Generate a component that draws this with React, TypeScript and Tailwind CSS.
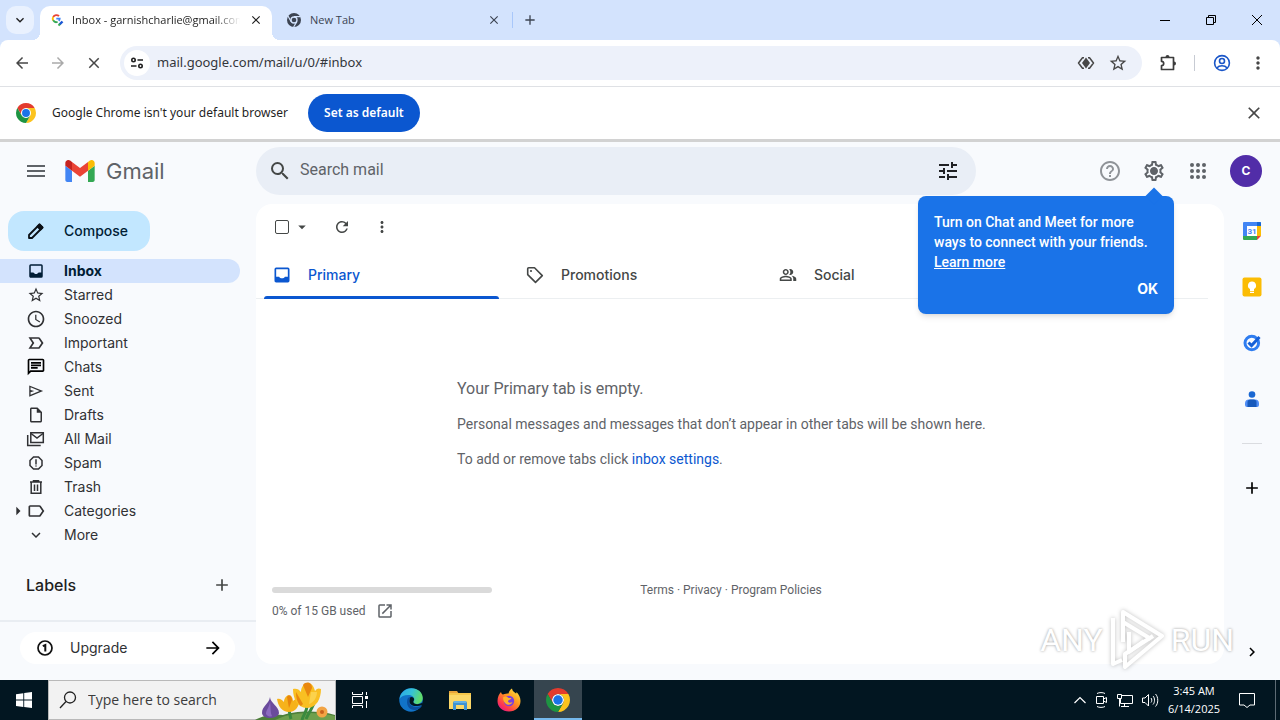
import type { ReactNode } from "react";
import {
  MdAccessTime,
  MdAdd,
  MdArrowBack,
  MdArrowDropDown,
  MdArrowForward,
  MdArrowRight,
  MdChevronRight,
  MdClose,
  MdExpandMore,
  MdHelpOutline,
  MdLabelImportantOutline,
  MdLabelOutline,
  MdMenu,
  MdMoreVert,
  MdOpenInNew,
  MdOutlineChat,
  MdOutlineInsertDriveFile,
  MdOutlinePeopleAlt,
  MdOutlineReport,
  MdOutlineSettings,
  MdRefresh,
  MdSearch,
  MdStarBorder,
  MdTune,
} from "react-icons/md";

/* ---------- Icons ---------- */

function ChromeLogo({ className }: { className?: string }) {
  return (
    <svg viewBox="0 0 48 48" className={className}>
      <circle cx="24" cy="24" r="12" fill="#fff" />
      <path fill="#e33b2e" d="M24 12h20.78a24 24 0 0 0-41.56 0l10.39 18A12 12 0 0 1 24 12Z" />
      <path fill="#fcc31e" d="M34.39 30 24 48a24 24 0 0 0 20.78-36H24a12 12 0 0 1 10.39 18Z" />
      <path fill="#1e9442" d="M13.61 30 3.22 12A24 24 0 0 0 24 48l10.39-18a12 12 0 0 1-20.78 0Z" />
      <circle cx="24" cy="24" r="9.5" fill="#1a73e8" />
    </svg>
  );
}

function ChromeMono() {
  return (
    <svg viewBox="0 0 48 48" className="size-4">
      <circle cx="24" cy="24" r="21" fill="#3c4452" />
      <circle cx="24" cy="24" r="11" fill="#d3e3fd" />
      <circle cx="24" cy="24" r="7" fill="#3c4452" />
      <path d="M24 14h20M15.5 29 6 12M32.5 29 23 45" stroke="#d3e3fd" strokeWidth="3.5" />
    </svg>
  );
}

function GoogleFavicon() {
  return (
    <svg viewBox="0 0 16 16" className="size-4" fill="none" strokeWidth="1.8">
      <path d="M9 4.2A3.6 3.6 0 0 0 3.2 5" stroke="#ea4335" />
      <path d="M3.2 4.9a3.6 3.6 0 0 0 0 3.6" stroke="#fbbc04" />
      <path d="M3.2 8.3a3.6 3.6 0 0 0 4.4 1.6" stroke="#34a853" />
      <path d="M6.3 6.6h3.4c0 1-.3 1.7-.9 2.3" stroke="#4285f4" />
      <path d="m9.5 12.5 3-3" stroke="#1a56d6" strokeWidth="2.4" />
      <path d="m8.5 13.5 1.5-1.5" stroke="#34a853" strokeWidth="2" />
    </svg>
  );
}

function GmailLogo() {
  return (
    <svg viewBox="52 42 88 66" className="h-[22px] w-[30px]">
      <path fill="#4285f4" d="M58 108h14V74L52 59v43c0 3.32 2.69 6 6 6" />
      <path fill="#34a853" d="M120 108h14c3.32 0 6-2.69 6-6V59l-20 15" />
      <path fill="#fbbc04" d="M120 48v26l20-15v-8c0-7.42-8.47-11.65-14.4-7.2" />
      <path fill="#ea4335" d="M72 74V48l24 18 24-18v26L96 92" />
      <path fill="#c5221f" d="M52 51v8l20 15V48l-5.6-4.2c-5.94-4.45-14.4-.22-14.4 7.2" />
    </svg>
  );
}

function SiteInfoIcon() {
  return (
    <svg viewBox="0 0 16 16" className="size-4" fill="none" stroke="#1f1f1f" strokeWidth="1.6">
      <circle cx="4.5" cy="5" r="1.7" />
      <path d="M8.5 5H14M2 11h5.5" />
      <circle cx="11.5" cy="11" r="1.7" />
    </svg>
  );
}

function LensIcon() {
  return (
    <svg viewBox="0 0 20 20" className="size-5" fill="none" stroke="#474747" strokeWidth="1.5" strokeLinejoin="round">
      <path d="M8 4.8H6.500L2.500 10l4 5.200H8M12 4.800h1.500l4 5.200-4 5.200H12" />
      <path fill="#474747" stroke="none" d="m10 4.500 4 5.500-4 5.500L6 10Z" />
    </svg>
  );
}

function PuzzleIcon() {
  return (
    <svg viewBox="0 0 20 20" className="size-5" fill="none" stroke="#3c3c3c" strokeWidth="1.7" strokeLinejoin="round">
      <path d="M3.5 4.5h12v12h-12v-3.8c1.4 0 2.2-1 2.2-2.2s-.8-2.2-2.2-2.2V4.5Z" />
      <path fill="#3c3c3c" stroke="none" d="M7.5 4a2 2 0 0 1 4 0ZM16 8.5a2 2 0 0 1 0 4Z" />
    </svg>
  );
}

function ProfileIcon() {
  return (
    <svg viewBox="0 0 20 20" className="size-5" fill="none" stroke="#1a56c8" strokeWidth="1.6">
      <circle cx="10" cy="10" r="7.4" />
      <circle cx="10" cy="8" r="2.5" />
      <path d="M4.8 15c1.3-1.5 3-2.2 5.2-2.2s3.9.7 5.2 2.2" />
    </svg>
  );
}

function PencilIcon() {
  return (
    <svg viewBox="0 0 20 20" className="size-5" fill="none" stroke="#0b1016" strokeWidth="1.8" strokeLinejoin="round">
      <path d="M3 17v-3L13.5 3.5l3 3L6 17H3Z" />
      <path d="m11.5 5.5 2-2 3 3-2 2Z" fill="#0b1016" />
    </svg>
  );
}

function InboxIcon({ className }: { className?: string }) {
  return (
    <svg viewBox="0 0 24 24" className={className} fill="currentColor">
      <path
        fillRule="evenodd"
        d="M19 3H5a2 2 0 0 0-2 2v14c0 1.1.9 2 2 2h14a2 2 0 0 0 2-2V5a2 2 0 0 0-2-2ZM5 5h14v9h-3.500c-.8 1.200-2 2-3.500 2s-2.700-.8-3.500-2H5Z"
      />
    </svg>
  );
}

function SendIcon() {
  return (
    <svg viewBox="0 -960 960 960" className="size-[18px]" fill="currentColor">
      <path d="M120-180v-600l740 300-740 300Zm70-105 480-195-480-195v135l200 60-200 60v135Z" />
    </svg>
  );
}

function AllMailIcon() {
  return (
    <svg viewBox="0 0 20 20" className="size-5" fill="none" stroke="currentColor" strokeWidth="1.5">
      <path d="M4.8 3.7h12.500v9.800H4.800Z" />
      <path d="m5 4.5 6 4.5 6-4.5M1.700 6v10.500h13" />
    </svg>
  );
}

function TrashIcon() {
  return (
    <svg viewBox="0 0 20 20" className="size-5" fill="none" stroke="currentColor" strokeWidth="1.5">
      <path d="M4 5h12M7.5 4.500V3.700h5v.8M5.200 5v11.300h9.600V5M8.500 7.500V14M11.500 7.500V14" />
    </svg>
  );
}

function TagIcon() {
  return (
    <svg viewBox="0 0 20 20" className="size-5" fill="none" stroke="currentColor" strokeWidth="1.6" strokeLinejoin="round">
      <path d="M2.7 3.800v5.800l7.800 7.800 6.800-6.800L9.500 2.800H3.700c-.6 0-1 .4-1 1Z" />
      <circle cx="6" cy="6" r="1.1" fill="currentColor" stroke="none" />
    </svg>
  );
}

function SettingsIcon() {
  return (
    <svg viewBox="0 0 24 24" className="size-6" fill="currentColor">
      <MdOutlineSettings size={24} />
      <circle cx="12" cy="12" r="3.2" />
    </svg>
  );
}

function AppsIcon() {
  const steps = [4, 10, 16];
  return (
    <svg viewBox="0 0 20 20" className="size-5" fill="#5f6368">
      {steps.map((y) => steps.map((x) => <circle key={`${x}-${y}`} cx={x} cy={y} r="2" />))}
    </svg>
  );
}

function OneIcon() {
  return (
    <svg viewBox="0 0 20 20" className="size-5" fill="none" stroke="#111" strokeWidth="1.7">
      <circle cx="10" cy="10" r="7" />
      <path d="M7.8 8.200 10.300 7v6.500" strokeWidth="2" />
    </svg>
  );
}

function CalendarIcon() {
  return (
    <svg viewBox="0 0 20 20" className="size-5">
      <path fill="#4285f4" d="M2 1h16a1 1 0 0 1 1 1v3H5v10H1V2a1 1 0 0 1 1-1Z" />
      <path fill="#1967d2" d="M15 1h3a1 1 0 0 1 1 1v3h-4Z" />
      <path fill="#fbbc04" d="M15 5h4v10h-4Z" />
      <path fill="#34a853" d="M1 15h14v4H2a1 1 0 0 1-1-1Z" />
      <path fill="#ea4335" d="M15 15h4l-4 4Z" />
      <path fill="#fff" d="M5 5h10v10H5Z" />
      <text x="10" y="13" fontSize="8" fontWeight="700" textAnchor="middle" fill="#4285f4" fontFamily="Roboto, sans-serif">
        31
      </text>
    </svg>
  );
}

function KeepIcon() {
  return (
    <svg viewBox="0 0 20 20" className="size-5">
      <rect x="0.5" y="0.5" width="19" height="19" rx="2" fill="#fbbc04" />
      <path fill="#fff" d="M10 4.500a4 4 0 0 0-2 7.500v2h4v-2a4 4 0 0 0-2-7.500ZM8 14.800h4V16H8Z" />
    </svg>
  );
}

function TasksIcon() {
  return (
    <svg viewBox="0 0 20 20" className="size-5" fill="none" strokeWidth="3">
      <circle cx="9.8" cy="10" r="6.8" stroke="#2f7df0" />
      <path d="m6.500 9.500 3 3 8-8.500" stroke="#1560d8" />
    </svg>
  );
}

function ContactsIcon() {
  return (
    <svg viewBox="0 0 20 20" className="size-5">
      <circle cx="10" cy="5.5" r="3.3" fill="#1967d2" />
      <path fill="#4f8df5" d="M3 14.500a4 4 0 0 1 4-4h6a4 4 0 0 1 4 4V16a2 2 0 0 1-2 2H5a2 2 0 0 1-2-2Z" />
      <path fill="#185abc" d="M5.500 13c0-1.500 1.300-2.500 2.800-2.500h3.400c1.500 0 2.800 1 2.800 2.500v5h-9Z" />
    </svg>
  );
}

function Flowers() {
  return (
    <svg viewBox="0 0 80 40" className="h-10 w-20 shrink-0">
      <path fill="#4d7f3a" d="M0 40c8-5 18-6 28-5 12-4 34-5 52 0v5Z" />
      <path fill="#6fa04d" d="M30 36c14-4 34-4 50 0v4H20Z" />
      <path fill="#6a4b9c" d="M15 17c0 6 9 9 9 16 0 3-5 5-9 5s-8-2-8-5c0-7 7-9 8-16Z" />
      <path fill="#8c6bc0" d="M15 22c-1 6-4 8-4 12 2 3 5 3 6 2-2-4-1-9-2-14Z" />
      <path d="M34 30c1 4 1 6 2 9M52 26c0 6-4 9-5 14M60 20c-2 8-6 12-9 19" stroke="#3a8a3e" strokeWidth="3" fill="none" />
      <path fill="#f6b21b" d="M22 19c3-1 5 1 7 3 0-4 3-7 5-7s4 3 4 6c2-2 5-3 7-2-1 7-4 13-11 13s-11-6-12-13Z" />
      <path fill="#e8850c" d="M32 17c2-3 5-1 5 3l-3 8Z" />
      <path fill="#f9bf22" d="M38 9c3-1 6 0 8 3 0-5 3-9 7-9s6 4 7 8c2-3 4-3 6-2 0 9-4 19-14 19S38 18 38 9Z" />
      <path fill="#e9880f" d="M48 5c3-4 9-3 9 3l-4 9ZM41 12l7 12-2 2c-4-3-5-9-5-14Z" />
      <path fill="#fbd24c" d="m56 12 6 0c0 6-4 11-8 12Z" />
      <circle cx="67" cy="32" r="5.5" fill="#f2a444" />
      <circle cx="67" cy="32" r="2" fill="#c8621c" />
    </svg>
  );
}

function EdgeLogo() {
  return (
    <svg viewBox="0 0 48 48" className="size-6">
      <defs>
        <linearGradient id="edgeTop" x1="0" y1="0" x2="1" y2="0.3">
          <stop offset="0" stopColor="#2aa8e8" />
          <stop offset="0.55" stopColor="#35c1d8" />
          <stop offset="1" stopColor="#5fdc6c" />
        </linearGradient>
      </defs>
      <circle cx="24" cy="24" r="23.5" fill="#1173c8" />
      <path fill="url(#edgeTop)" d="M1 22C3 9 13 .5 25 .5 38 .5 47.500 9 47.500 20c0 7-5 12-12 12-5 0-7-2-7-4 0-1 2-2 2-5 0-5-5-9-12-9C10 14 4 17 1 22Z" />
      <path fill="#0b4f9e" d="M17 22c-3 9 1 21 13 22 6 1 11-2 15-7 1-1 0-2-1-1-10 5-24 1-24-11 0-4 3-6 4-6-3-1-6 0-7 3Z" />
      <path fill="#021621" d="M24 18c5 0 7 3 6 6-1 2-2 3-1 5 3 5 12 4 18 0v4c-3 3-9 3-14 3-8 0-13-5-12-12 .4-3 1.600-6 3-6Z" />
    </svg>
  );
}

function ExplorerLogo() {
  return (
    <svg viewBox="0 0 24 24" className="size-6">
      <path fill="#e8a33a" d="M1 3h8l2 3H1Z" />
      <path fill="#fbd768" d="M1 6h22v15H1Z" />
      <path fill="#f5c64a" d="M1 5h22v2H1Z" />
      <path fill="#3f92d2" d="M5 15a2 2 0 0 1 2-2h10a2 2 0 0 1 2 2v7h-3v-5H8v5H5Z" />
      <path fill="#62b0e6" d="M6 13h12v2H6Z" />
    </svg>
  );
}

function FirefoxLogo() {
  return (
    <svg viewBox="0 0 24 24" className="size-6">
      <defs>
        <linearGradient id="foxFire" x1="1" y1="0" x2="0.2" y2="1">
          <stop offset="0" stopColor="#fff24a" />
          <stop offset="0.45" stopColor="#ff9a1f" />
          <stop offset="0.8" stopColor="#ff3a4c" />
          <stop offset="1" stopColor="#e3158c" />
        </linearGradient>
      </defs>
      <path fill="url(#foxFire)" d="M4 4c.3 1.500 1 2.300 2 2.500C8 5.500 10 5.500 11.500 5.500 12 3 13.500 1.500 15 .5c.2 2.500 2.500 3.500 4 5 .5-.3.600-1 .500-1.500C22 6.500 23.500 9.500 23.500 13c0 6-5 10.500-11.500 10.500S.5 19 .5 13C.5 9 2 6 4 4Z" />
      <circle cx="12" cy="13" r="5.2" fill="#7a3fe0" />
      <path fill="#ffb02a" d="M6 9.500c2-1.500 4-1 5.500.5h3c-1 2-3 1.800-3.500 3-.3 1.500 2 2.500 4.500 1-1 3-5 3.500-7 1.500C7 14 6 12 6 9.500Z" />
    </svg>
  );
}

function TaskViewIcon() {
  return (
    <svg viewBox="0 0 16 16" className="size-4" fill="none" stroke="#fff">
      <path d="M.5 0v2.500h10V0M.5 16v-2.500h10V16M.5 4.500h10v7H.5ZM14.500 0v3M14.500 9v7" />
      <path fill="#fff" stroke="none" d="M13 4h3v3h-3Z" />
    </svg>
  );
}

function CameraIcon() {
  return (
    <svg viewBox="0 0 16 16" className="size-4" fill="none" stroke="#fff">
      <path d="M3.500 4.500h7v7h-7ZM10.500 7l3-1.500v5l-3-1.500M4 1.500c2-1.200 6-1.200 8 0M4 14.500c2 1.200 6 1.200 8 0" />
    </svg>
  );
}

function NetworkIcon() {
  return (
    <svg viewBox="0 0 18 16" className="h-4 w-[18px]" fill="none" stroke="#fff">
      <path d="M6 3.500h10.500v8H4.500V7M8.500 11.500v3M5 14.500h8M1.500 2.500h4v4h-4ZM3.500 6.500v8" />
    </svg>
  );
}

function SpeakerIcon() {
  return (
    <svg viewBox="0 0 18 16" className="h-4 w-[18px]" fill="none" stroke="#fff">
      <path d="M1.500 6v4.500H4L7.500 14V2.500L4 6ZM10 6c1 1 1 3.500 0 4.500M12 4c2 2 2 6.500 0 8.500M14.500 2c3 3 3 9.500 0 12.500" />
    </svg>
  );
}

function Watermark() {
  return (
    <div
      aria-hidden="true"
      className="pointer-events-none absolute right-[46px] bottom-2 flex items-center gap-1 font-[Roboto,sans-serif] text-[32px] text-white [text-shadow:0_0_3px_rgba(0,0,0,0.4)]"
    >
      <span>ANY</span>
      <svg
        viewBox="0 0 60 64"
        className="h-16 w-[60px] drop-shadow-[0_0_2px_rgba(0,0,0,0.25)]"
        fill="none"
        stroke="#fff"
        strokeWidth="4"
        strokeLinejoin="round"
      >
        <path d="M16 34V4l39 24-37 31V46L46 28M6 10v46l9-4" />
        <path d="M16 14 44 31M22 24v20l15-11" />
      </svg>
      <span>RUN</span>
    </div>
  );
}

/* ---------- Browser chrome ---------- */

function TabStrip() {
  return (
    <div className="flex h-10 items-center bg-[#d3e3fd] text-[11px] text-[#1f1f1f]">
      <button aria-label="Search tabs" className="ml-1.5 flex size-7 items-center justify-center rounded-[10px] bg-[#e9f1fe]">
        <MdExpandMore className="size-4" />
      </button>
      <div className="relative ml-1.5 flex h-[34px] w-[232px] items-center self-end rounded-t-[10px] bg-white pr-2 pl-2.5 pb-1.5">
        {/* flared feet of the active tab */}
        <span className="absolute bottom-0 -left-2 size-2 bg-[radial-gradient(circle_at_0_0,transparent_8px,white_8px)]" />
        <span className="absolute -right-2 bottom-0 size-2 bg-[radial-gradient(circle_at_100%_0,transparent_8px,white_8px)]" />
        <GoogleFavicon />
        <span className="ml-1.5 flex-1 overflow-hidden whitespace-nowrap [mask-image:linear-gradient(to_right,black_85%,transparent)]">
          Inbox - garnishcharlie@gmail.com
        </span>
        <button aria-label="Close tab" className="ml-2 flex size-4 items-center justify-center">
          <MdClose className="size-3.5" />
        </button>
      </div>
      <div className="flex w-[230px] items-center pl-3.5 text-[#3c4452]">
        <ChromeMono />
        <span className="ml-2 flex-1">New Tab</span>
        <button aria-label="Close tab" className="flex size-4 items-center justify-center">
          <MdClose className="size-3.5" />
        </button>
      </div>
      <div className="ml-2.5 h-4 w-px bg-[#a8c7fa]" />
      <button aria-label="New tab" className="ml-[7px] flex size-5 items-center justify-center text-[#3c4452]">
        <MdAdd className="size-4" />
      </button>
      <div className="ml-auto flex text-black">
        <button aria-label="Minimize" className="flex h-10 w-[46px] items-center justify-center">
          <svg viewBox="0 0 10 10" className="size-2.5" stroke="currentColor">
            <path d="M0 5.500h10" />
          </svg>
        </button>
        <button aria-label="Restore" className="flex h-10 w-[46px] items-center justify-center">
          <svg viewBox="0 0 10 10" className="size-2.5" fill="none" stroke="currentColor">
            <path d="M.5 2.500h7v7h-7ZM2.500 2.500v-2h7v7h-2" />
          </svg>
        </button>
        <button aria-label="Close window" className="flex h-10 w-[46px] items-center justify-center">
          <svg viewBox="0 0 10 10" className="size-2.5" stroke="currentColor">
            <path d="m0 0 10 10M10 0 0 10" />
          </svg>
        </button>
      </div>
    </div>
  );
}

function AddressBar() {
  return (
    <div className="bg-[#d3e3fd]">
      <div className="flex h-[47px] items-center rounded-t-lg border-b border-[#dfe1e5] bg-white px-3 text-[#474747]">
        <button aria-label="Back" className="flex size-5 items-center justify-center">
          <MdArrowBack className="size-[18px]" />
        </button>
        <button aria-label="Forward" className="ml-4 flex size-5 items-center justify-center text-[#aaa]">
          <MdArrowForward className="size-[18px]" />
        </button>
        <button aria-label="Stop loading" className="ml-4 flex size-5 items-center justify-center">
          <MdClose className="size-[18px]" />
        </button>
        <div className="ml-4 flex h-[34px] flex-1 items-center rounded-full bg-[#edf1fa] pr-3.5 pl-1">
          <button aria-label="View site information" className="flex size-[26px] items-center justify-center rounded-full bg-white">
            <SiteInfoIcon />
          </button>
          <input
            type="text"
            aria-label="Address and search bar"
            defaultValue="mail.google.com/mail/u/0/#inbox"
            className="ml-[7px] flex-1 bg-transparent font-['Noto_Sans',sans-serif] text-[13px] text-[#33363b] outline-none"
          />
          <button aria-label="Search with Lens">
            <LensIcon />
          </button>
          <button aria-label="Bookmark this tab" className="ml-3">
            <MdStarBorder className="size-5" />
          </button>
        </div>
        <button aria-label="Extensions" className="ml-4">
          <PuzzleIcon />
        </button>
        <div className="ml-4 h-4 w-px bg-[#c7cbd3]" />
        <button aria-label="Profile" className="ml-[17px]">
          <ProfileIcon />
        </button>
        <button aria-label="Chrome menu" className="ml-4">
          <MdMoreVert className="size-5" />
        </button>
      </div>
    </div>
  );
}

function DefaultBrowserBar() {
  return (
    <div className="flex h-[55px] items-center border-b-[3px] border-[#d2d2d2] bg-white px-4 font-['Noto_Sans',sans-serif] text-xs text-[#1f1f1f]">
      <ChromeLogo className="size-5" />
      <span className="ml-4">Google Chrome isn't your default browser</span>
      <button className="ml-5 h-[38px] w-28 rounded-full bg-[#0b57d0] font-semibold text-white">Set as default</button>
      <button aria-label="Dismiss" className="ml-auto text-[#474747]">
        <MdClose className="size-5" />
      </button>
    </div>
  );
}

/* ---------- Gmail ---------- */

function ChatTooltip() {
  return (
    <div className="absolute top-[37px] right-[-8px] z-10 w-64 rounded-lg bg-[#1a73e8] px-4 pt-4 pb-[15px] font-[Roboto,sans-serif] text-sm leading-5 font-medium text-white shadow-md">
      <div className="absolute -top-1.5 right-[14px] size-3 rotate-45 bg-[#1a73e8]" />
      <p>Turn on Chat and Meet for more ways to connect with your friends.</p>
      <a href="#learn" className="block w-fit underline">
        Learn more
      </a>
      <button className="mt-[7px] ml-auto block font-[Inter,Roboto,sans-serif] font-bold">OK</button>
    </div>
  );
}

function GmailHeader() {
  return (
    <header className="flex h-[58px] shrink-0 items-center">
      <div className="flex w-64 shrink-0 items-center pl-6">
        <button aria-label="Main menu" className="text-[#5f6368]">
          <MdMenu className="size-6" />
        </button>
        <a href="#inbox" className="ml-[17px] flex items-center gap-[11px]">
          <GmailLogo />
          <span className="text-[22px] text-[#5f6368]">Gmail</span>
        </a>
      </div>
      <form className="flex h-12 max-w-[720px] flex-1 items-center rounded-full bg-[#e9eef6] pr-4 pl-3">
        <button type="button" aria-label="Search" className="text-[#444746]">
          <MdSearch className="size-6" />
        </button>
        <input
          type="text"
          aria-label="Search mail"
          placeholder="Search mail"
          className="ml-2 flex-1 bg-transparent pb-0.5 font-[Roboto,sans-serif] text-base outline-none placeholder:text-[#5f6368]"
        />
        <button type="button" aria-label="Search options" className="text-[#202124]">
          <MdTune className="size-6" />
        </button>
      </form>
      <div className="ml-auto flex items-center pr-[18px] text-[#5f6368]">
        <button aria-label="Support" className="text-[#8f9398]">
          <MdHelpOutline className="size-6" />
        </button>
        <div className="relative ml-5 flex">
          <button aria-label="Settings">
            <SettingsIcon />
          </button>
          <ChatTooltip />
        </div>
        <button aria-label="Google apps" className="ml-[22px]">
          <AppsIcon />
        </button>
        <button
          aria-label="Google Account"
          className="ml-[22px] flex size-8 items-center justify-center rounded-full bg-[#512da8] text-xs font-bold text-white"
        >
          C
        </button>
      </div>
    </header>
  );
}

interface NavItem {
  label: string;
  icon: ReactNode;
  active?: boolean;
  expandable?: boolean;
}

const navItems: NavItem[] = [
  { label: "Inbox", icon: <InboxIcon className="size-[18px]" />, active: true },
  { label: "Starred", icon: <MdStarBorder className="size-[18px]" /> },
  { label: "Snoozed", icon: <MdAccessTime className="size-5" /> },
  { label: "Important", icon: <MdLabelImportantOutline className="size-5" /> },
  { label: "Chats", icon: <MdOutlineChat className="size-5 text-black" /> },
  { label: "Sent", icon: <SendIcon /> },
  { label: "Drafts", icon: <MdOutlineInsertDriveFile className="size-[18px]" /> },
  { label: "All Mail", icon: <AllMailIcon /> },
  { label: "Spam", icon: <MdOutlineReport className="size-[18px]" /> },
  { label: "Trash", icon: <TrashIcon /> },
  { label: "Categories", icon: <MdLabelOutline className="size-5" />, expandable: true },
  { label: "More", icon: <MdExpandMore className="size-[18px]" /> },
];

function Sidebar() {
  return (
    <aside className="flex w-64 shrink-0 flex-col pt-[7px]">
      <button className="ml-2 flex h-10 w-[142px] shrink-0 items-center rounded-2xl bg-[#c2e7ff] pl-[18px] text-sm font-medium text-[#001d35]">
        <PencilIcon />
        <span className="ml-[18px]">Compose</span>
      </button>
      <nav className="mt-2 mr-4 text-sm text-[#303134]">
        {navItems.map((item) => (
          <a
            key={item.label}
            href={`#${item.label.toLowerCase()}`}
            className={
              item.active
                ? "flex h-6 items-center rounded-r-full bg-[#d3e3fd] font-bold text-[#001d35]"
                : "flex h-6 items-center"
            }
          >
            <span className="flex w-6 justify-end">{item.expandable && <MdArrowRight className="-mr-1 size-5" />}</span>
            <span className="flex w-6 justify-center">{item.icon}</span>
            <span className="ml-4">{item.label}</span>
          </a>
        ))}
      </nav>
      <div className="mt-[26px] flex items-center justify-between pr-6 pl-[26px] text-[#1f1f1f]">
        <h2 className="text-base leading-6 font-medium">Labels</h2>
        <button aria-label="Create new label" className="text-[#444746]">
          <MdAdd className="size-5" />
        </button>
      </div>
      <div className="mt-auto border-t-2 border-[#e9edf2] pt-2.5 pb-4 pl-5">
        <button className="flex h-8 w-[215px] items-center rounded-full bg-white pr-3 pl-[15px] text-sm text-[#303134]">
          <OneIcon />
          <span className="ml-[15px]">Upgrade</span>
          <MdArrowForward className="ml-auto size-5 text-black" />
        </button>
      </div>
    </aside>
  );
}

const categoryTabs = [
  { label: "Primary", icon: <InboxIcon className="size-5" />, active: true },
  { label: "Promotions", icon: <TagIcon />, active: false },
  { label: "Social", icon: <MdOutlinePeopleAlt className="size-[18px]" />, active: false },
];

function MailPanel() {
  return (
    <main className="mb-4 flex min-w-0 flex-1 flex-col rounded-2xl bg-white">
      <div className="flex h-[46px] shrink-0 items-center pl-[19px] text-[#444746]">
        <input
          type="checkbox"
          aria-label="Select"
          className="size-[14px] appearance-none rounded-xs border border-[#444746]"
        />
        <button aria-label="Select options" className="ml-1">
          <MdArrowDropDown className="size-[18px]" />
        </button>
        <button aria-label="Refresh" className="ml-[22px]">
          <MdRefresh className="size-[18px]" />
        </button>
        <button aria-label="More" className="ml-[22px]">
          <MdMoreVert className="size-[18px]" />
        </button>
      </div>
      <div role="tablist" className="mr-4 flex h-[49px] shrink-0 border-b border-[#eceff1] pl-2 text-sm font-medium text-[#444746]">
        {categoryTabs.map((tab) => (
          <div key={tab.label} className="w-[253px] pr-[18px]">
            <button
              role="tab"
              aria-selected={tab.active}
              className={
                tab.active
                  ? "relative flex h-12 w-full items-center pt-0.5 pl-2 text-[#0b57d0]"
                  : "flex h-12 w-full items-center pt-0.5 pl-2"
              }
            >
              <span className="flex w-5 justify-center">{tab.icon}</span>
              <span className="ml-4">{tab.label}</span>
              {tab.active && <span className="absolute inset-x-0 -bottom-px h-[3px] rounded-t-full bg-[#0b57d0]" />}
            </button>
          </div>
        ))}
      </div>
      <div className="pt-[78px] pl-[201px] font-[Roboto,sans-serif] text-sm text-[#5f6368]">
        <p className="text-base leading-6">Your Primary tab is empty.</p>
        <p className="mt-[11px] leading-6">
          Personal messages and messages that don’t appear in other tabs will be shown here.
        </p>
        <p className="mt-[11px] leading-6">
          To add or remove tabs click{" "}
          <a href="#settings" className="text-[#0b57d0]">
            inbox settings
          </a>
          .
        </p>
      </div>
      <footer className="mt-auto grid grid-cols-3 px-4 pb-[43px] font-[Roboto,sans-serif] text-xs text-[#5f6368]">
        <div className="pt-[5px]">
          <div className="h-1.5 w-[220px] rounded-full bg-[#dadada]" />
          <div className="mt-2 flex h-5 items-center">
            <span>0% of 15 GB used</span>
            <a href="#storage" aria-label="Manage storage" className="ml-2.5">
              <MdOpenInNew className="size-[18px]" />
            </a>
          </div>
        </div>
        <p className="pr-[18px] text-center leading-4">
          <a href="#terms">Terms</a> · <a href="#privacy">Privacy</a> · <a href="#policies">Program Policies</a>
        </p>
      </footer>
    </main>
  );
}

function SideRail() {
  return (
    <aside className="flex w-14 shrink-0 flex-col items-center pt-[17px] pb-[19px]">
      <div className="flex flex-col gap-9">
        <button aria-label="Calendar">
          <CalendarIcon />
        </button>
        <button aria-label="Keep">
          <KeepIcon />
        </button>
        <button aria-label="Tasks">
          <TasksIcon />
        </button>
        <button aria-label="Contacts">
          <ContactsIcon />
        </button>
      </div>
      <div className="mt-[34px] h-px w-5 bg-[#dadce0]" />
      <button aria-label="Get add-ons" className="mt-[34px]">
        <MdAdd className="size-5" />
      </button>
      <button aria-label="Hide side panel" className="mt-auto">
        <MdChevronRight className="size-[18px]" />
      </button>
    </aside>
  );
}

/* ---------- Windows taskbar ---------- */

function Taskbar() {
  return (
    <div className="flex h-10 shrink-0 items-center bg-[#021621] text-white">
      <button aria-label="Start" className="flex w-12 justify-center">
        <svg viewBox="0 0 16 16" className="size-4" fill="#fff">
          <path d="M0 2.200 7.300 1.200v6.400H0ZM8.200 1.100 16 0v7.600H8.200ZM0 8.500h7.300v6.400L0 13.900ZM8.200 8.500H16V16l-7.800-1.100Z" />
        </svg>
      </button>
      <label className="flex h-10 w-72 items-center border border-[#b9b9b9] bg-[#f2f2f2] pl-2.5 text-[#1f1f1f]">
        <svg viewBox="0 0 18 18" className="size-[18px] shrink-0" fill="none" stroke="#222" strokeWidth="1.3">
          <circle cx="11" cy="6.5" r="5.5" />
          <path d="M7 10.500 1 17" />
        </svg>
        <input
          type="text"
          aria-label="Type here to search"
          placeholder="Type here to search"
          className="ml-[11px] w-0 flex-1 bg-transparent text-sm outline-none placeholder:text-[#3c3c3c]"
        />
        <Flowers />
      </label>
      <button aria-label="Task View" className="flex h-10 w-12 items-center justify-center">
        <TaskViewIcon />
      </button>
      <button aria-label="Microsoft Edge" className="ml-[3px] flex h-10 w-12 items-center justify-center">
        <EdgeLogo />
      </button>
      <button aria-label="File Explorer" className="ml-px flex h-10 w-12 items-center justify-center">
        <ExplorerLogo />
      </button>
      <button aria-label="Firefox" className="ml-px flex h-10 w-12 items-center justify-center">
        <FirefoxLogo />
      </button>
      <button
        aria-label="Google Chrome"
        className="ml-px flex h-10 w-12 items-center justify-center border-b-2 border-[#76b9ed] bg-[#36454f] pt-0.5"
      >
        <ChromeLogo className="size-6" />
      </button>
      <div className="ml-auto flex items-center">
        <div className="flex items-center gap-[7px]">
          <svg viewBox="0 0 12 8" className="h-2 w-3" fill="none" stroke="#fff" strokeWidth="1.2">
            <path d="m.5 7 5.500-5.500L11.500 7" />
          </svg>
          <CameraIcon />
          <NetworkIcon />
          <SpeakerIcon />
        </div>
        <div className="ml-2 w-[54px] text-center text-[11px] leading-[18px] whitespace-nowrap">
          <div>3:45 AM</div>
          <div>6/14/2025</div>
        </div>
        <button aria-label="Notifications" className="ml-[18px]">
          <svg viewBox="0 0 16 16" className="size-4" fill="none" stroke="#fff">
            <path d="M.5 1.500h15v11.500H11l-3 2.500L5 13H.5Z" />
          </svg>
        </button>
        <div className="mr-1 ml-5 h-10 w-px bg-[#5d6b75]" />
      </div>
    </div>
  );
}

export default function App() {
  return (
    <div className="flex min-h-screen flex-col bg-[#f8fafd] font-['Open_Sans','Noto_Sans',sans-serif]">
      <TabStrip />
      <AddressBar />
      <DefaultBrowserBar />
      <div className="relative flex flex-1 flex-col font-[Inter,Roboto,sans-serif]">
        <GmailHeader />
        <div className="flex flex-1 pt-1">
          <Sidebar />
          <MailPanel />
          <SideRail />
        </div>
        <Watermark />
      </div>
      <Taskbar />
    </div>
  );
}
